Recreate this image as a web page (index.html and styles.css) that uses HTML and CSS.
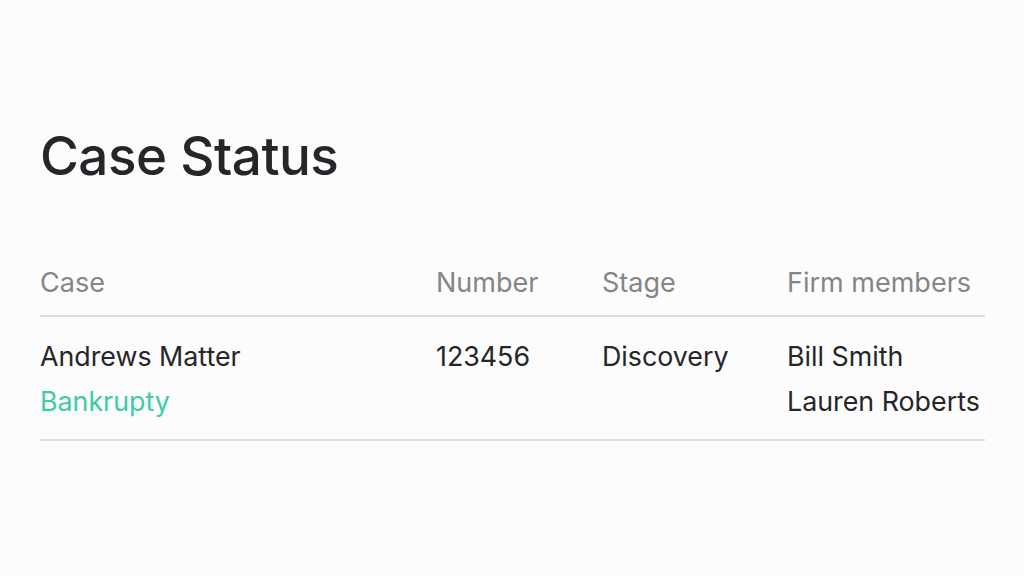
FILE: index.html
```html
<!DOCTYPE html>
<html lang="en">
<head>
<meta charset="utf-8">
<title>Case Status</title>
<link rel="stylesheet" href="styles.css">
</head>
<body>
<main class="page">
  <h1 class="title">Case Status</h1>
  <div class="table">
    <div class="row head">
      <div class="cell">Case</div>
      <div class="cell">Number</div>
      <div class="cell">Stage</div>
      <div class="cell">Firm members</div>
    </div>
    <div class="row body">
      <div class="cell">
        <div>Andrews Matter</div>
        <div class="type">Bankrupty</div>
      </div>
      <div class="cell">123456</div>
      <div class="cell">Discovery</div>
      <div class="cell">
        <div>Bill Smith</div>
        <div>Lauren Roberts</div>
      </div>
    </div>
  </div>
</main>
</body>
</html>
```
FILE: styles.css
```css
html, body {
  margin: 0;
  padding: 0;
  background: #fcfcfc;
}
body {
  font-family: Inter, "Noto Sans", sans-serif;
  color: #26262a;
}
.page {
  width: 945px;
  padding: 124px 0 0 40px;
}
.title {
  margin: 0;
  font-size: 53px;
  font-weight: 500;
  line-height: 64px;
  letter-spacing: -0.5px;
}
.table {
  margin-top: 78px;
}
.row {
  display: grid;
  grid-template-columns: 396px 166px 185px 198px;
}
.head {
  color: #858585;
  font-size: 27px;
  line-height: 34px;
  padding-bottom: 15px;
  border-bottom: 2px solid #dedede;
}
.body {
  font-size: 26.8px;
  line-height: 45px;
  padding: 17px 0 15px;
  border-bottom: 2px solid #dedede;
}
.type {
  color: #3ecba6;
}
```
